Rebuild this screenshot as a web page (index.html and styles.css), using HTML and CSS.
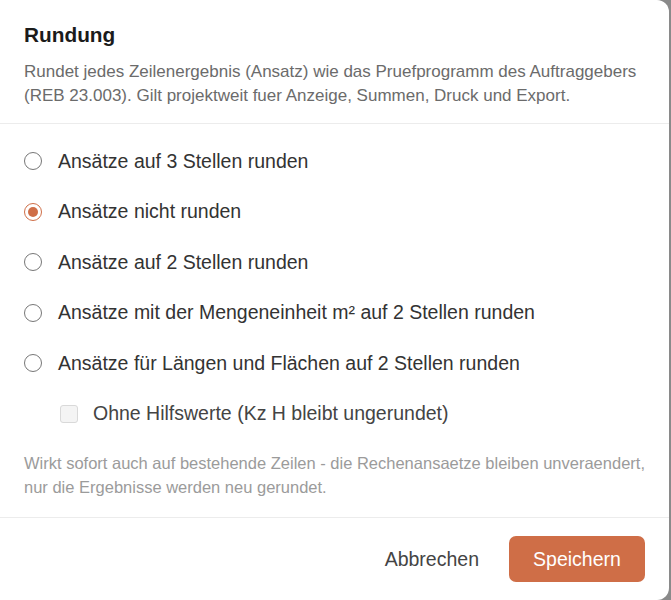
FILE: index.html
```html
<!DOCTYPE html>
<html lang="de">
<head>
<meta charset="utf-8">
<title>Rundung</title>
<link rel="stylesheet" href="styles.css">
</head>
<body>
<div class="dialog">
  <div class="header">
    <h2 class="title">Rundung</h2>
    <p class="desc">Rundet jedes Zeilenergebnis (Ansatz) wie das Pruefprogramm des Auftraggebers (REB 23.003). Gilt projektweit fuer Anzeige, Summen, Druck und Export.</p>
  </div>
  <div class="body">
    <div class="options">
      <label class="option"><span class="radio"></span><span>Ansätze auf 3 Stellen runden</span></label>
      <label class="option"><span class="radio checked"></span><span>Ansätze nicht runden</span></label>
      <label class="option"><span class="radio"></span><span>Ansätze auf 2 Stellen runden</span></label>
      <label class="option"><span class="radio"></span><span>Ansätze mit der Mengeneinheit m² auf 2 Stellen runden</span></label>
      <label class="option"><span class="radio"></span><span>Ansätze für Längen und Flächen auf 2 Stellen runden</span></label>
      <label class="option sub"><span class="checkbox"></span><span>Ohne Hilfswerte (Kz H bleibt ungerundet)</span></label>
    </div>
    <p class="note">Wirkt sofort auch auf bestehende Zeilen - die Rechenansaetze bleiben unveraendert, nur die Ergebnisse werden neu gerundet.</p>
  </div>
  <div class="footer">
    <button class="btn btn-text">Abbrechen</button>
    <button class="btn btn-primary">Speichern</button>
  </div>
</div>
</body>
</html>
```
FILE: styles.css
```css
* { box-sizing: border-box; }
html, body { margin: 0; padding: 0; }
body {
  width: 671px;
  height: 600px;
  overflow: hidden;
  background: #8a8a8a;
  font-family: "Liberation Sans", Arial, sans-serif;
}
.dialog {
  width: 669px;
  height: 600px;
  background: #fff;
  border-radius: 0 12px 12px 0;
  display: flex;
  flex-direction: column;
}
.header {
  padding: 22px 24px 15px;
  border-bottom: 1px solid #ececec;
}
.title {
  margin: 0;
  font-size: 20.8px;
  line-height: 26px;
  font-weight: bold;
  color: #1b1b1b;
}
.desc {
  margin: 12px 0 0;
  font-size: 17px;
  line-height: 24px;
  color: #6b6b6b;
}
.body {
  padding: 12px 24px 18px;
  border-bottom: 1px solid #ececec;
}
.options {
  display: flex;
  flex-direction: column;
}
.option {
  display: flex;
  align-items: center;
  gap: 16px;
  height: 50.5px;
  font-size: 19.5px;
  color: #333;
}
.radio {
  width: 18px;
  height: 18px;
  border: 1.5px solid #777;
  border-radius: 50%;
  flex: none;
  display: flex;
  align-items: center;
  justify-content: center;
}
.radio.checked {
  border: 1.5px solid #cf6e47;
}
.radio.checked::after {
  content: "";
  width: 10px;
  height: 10px;
  border-radius: 50%;
  background: #cf6e47;
}
.option.sub {
  padding-left: 36px;
  gap: 15px;
  color: #444;
}
.checkbox {
  width: 18px;
  height: 18px;
  border: 1px solid #d9d9d9;
  background: #f4f4f4;
  border-radius: 3px;
  flex: none;
}
.note {
  margin: 12px 0 0;
  font-size: 16.5px;
  line-height: 24px;
  color: #9b9b9b;
}
.footer {
  flex: 1;
  display: flex;
  justify-content: flex-end;
  align-items: flex-start;
  gap: 30px;
  padding: 18px 24px 0;
}
.btn {
  font-family: inherit;
  font-size: 19.5px;
  border: none;
  cursor: pointer;
}
.btn-text {
  background: none;
  color: #444;
  padding: 0;
  height: 46px;
}
.btn-primary {
  background: #cf6e47;
  color: #fff;
  height: 46px;
  width: 136px;
  border-radius: 7px;
}
```
